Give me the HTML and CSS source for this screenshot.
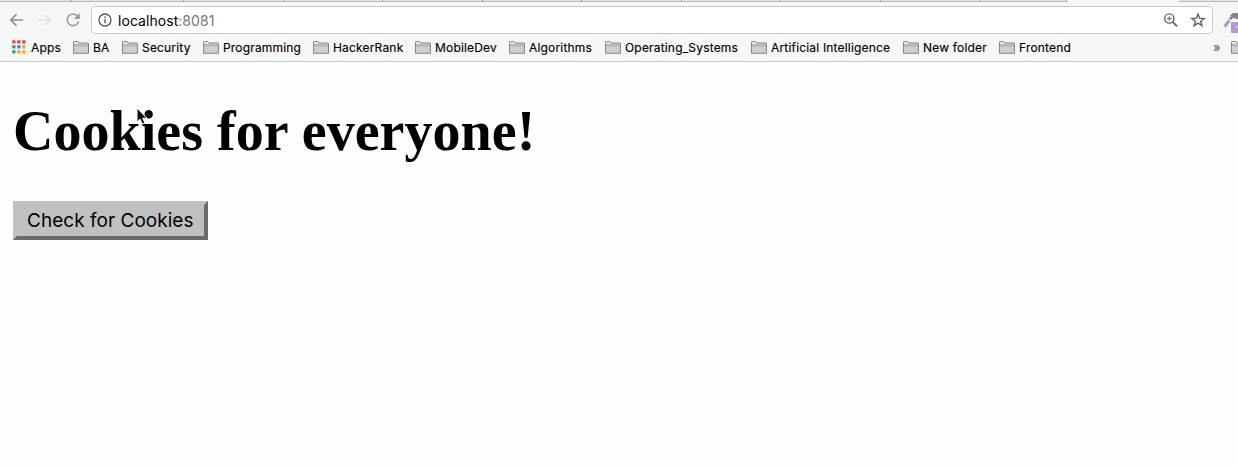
FILE: index.html
```html
<!DOCTYPE html>
<html lang="en">
<head>
<meta charset="utf-8">
<title>Cookies</title>
<link rel="stylesheet" href="styles.css">
</head>
<body>
<svg class="defs" aria-hidden="true">
  <symbol id="folder" viewBox="0 0 16 13">
    <path d="M.5 12.3V1.2Q.5.5 1.2.5H5l1 1.5h8.8q.7 0 .7.7v9.6z" fill="#cecece" stroke="#858585"/>
    <path d="M1.2 1.2h3.6l.8 1.4H1.2z" fill="#fff"/>
    <path d="M1 2.8h14v2H1z" fill="#bcbcbc"/>
    <path d="M1 4.9h14" stroke="#a9a9a9" stroke-width=".7"/>
  </symbol>
</svg>
<header class="browser">
  <div class="tabs"><i class="tab-first"></i><i class="tab-second"></i><i></i><i></i><i></i><i></i><i></i><i></i><i></i><i></i><i class="tab-last"></i><b></b><em></em></div>
  <div class="toolbar">
    <nav class="navigation">
      <svg class="back" width="16" height="14" viewBox="0 0 16 14"><path d="M14 7H2M7.5 1.3 1.8 7l5.7 5.7" fill="none" stroke="#8c8d8e" stroke-width="1.6"/></svg>
      <svg class="forward" width="16" height="14" viewBox="0 0 16 14"><path d="M1 7h12M7.8 1.3 13.5 7l-5.7 5.7" fill="none" stroke="#dfe1e2" stroke-width="1.4"/></svg>
      <svg class="reload" width="16" height="16" viewBox="0 0 16 16"><path d="M13.6 9.4a5.8 5.8 0 1 1-1.3-5.5L14 5.8" fill="none" stroke="#989a9b" stroke-width="1.6"/><path d="M14.8 1v6H8.8z" fill="#989a9b"/></svg>
    </nav>
    <div class="address">
      <svg width="14" height="14" viewBox="0 0 14 14"><circle cx="7" cy="7" r="6" fill="none" stroke="#555" stroke-width="1.3"/><path d="M7 6.2v4M7 3.6v1.4" stroke="#555" stroke-width="1.4"/></svg>
      <span class="url">localhost<span>:8081</span></span>
      <svg class="magnifier" width="16" height="16" viewBox="0 0 16 16"><circle cx="6.3" cy="6.5" r="4.6" fill="none" stroke="#666" stroke-width="1.4"/><path d="m9.8 10 4.3 4.3" stroke="#666" stroke-width="1.8"/><path d="M4 6.5h4.6M6.3 4.2v4.6" stroke="#666" stroke-width="1.1"/></svg>
      <svg class="star" width="16" height="16" viewBox="0 0 16 16"><path d="m8 2 1.6 4.2 4.6.3-3.5 2.8 1.2 4.4L8 11.2l-3.9 2.5 1.2-4.4-3.5-2.8 4.6-.3z" fill="none" stroke="#626262" stroke-width="1.4"/></svg>
    </div>
    <svg class="extension" width="15" height="22" viewBox="0 0 15 22"><path d="m1.5 15.5 5-6" stroke="#b291cf" stroke-width="3"/><path d="M7 4.5 10 2h5v6h-2L10.500 6.500 8 9 5.500 7.500 8 5.500z" fill="#858585"/><path d="M8 11h7v11H8z" fill="#b29bd2"/><path d="M13 16h2" stroke="#fff"/></svg>
  </div>
  <nav class="bookmarks">
    <a class="bookmark apps"><svg width="14" height="14" viewBox="0 0 14 14"><g fill="#ec4141"><path d="M.2.2h3.300v3.300H.2zM5.200.2h3.300v3.300H5.200zM10.200.2h3.300v3.300h-3.300z"/></g><path d="M.2 5.200h3.300v3.300H.2zM.2 10.200h3.300v3.300H.2z" fill="#3d9d59"/><path d="M5.200 5.200h3.300v3.300H5.200z" fill="#3488ed"/><path d="M10.200 5.200h3.300v3.300h-3.300zM5.200 10.200h3.300v3.300H5.200zM10.200 10.200h3.300v3.300h-3.300z" fill="#f2a82c"/></svg><span>Apps</span></a>
    <a class="bookmark"><svg><use href="#folder"/></svg><span>BA</span></a>
    <a class="bookmark"><svg><use href="#folder"/></svg><span>Security</span></a>
    <a class="bookmark"><svg><use href="#folder"/></svg><span>Programming</span></a>
    <a class="bookmark"><svg><use href="#folder"/></svg><span>HackerRank</span></a>
    <a class="bookmark"><svg><use href="#folder"/></svg><span>MobileDev</span></a>
    <a class="bookmark"><svg><use href="#folder"/></svg><span>Algorithms</span></a>
    <a class="bookmark"><svg><use href="#folder"/></svg><span>Operating_Systems</span></a>
    <a class="bookmark"><svg><use href="#folder"/></svg><span>Artificial Intelligence</span></a>
    <a class="bookmark"><svg><use href="#folder"/></svg><span>New folder</span></a>
    <a class="bookmark"><svg><use href="#folder"/></svg><span>Frontend</span></a>
    <span class="more">»</span><svg class="other"><use href="#folder"/></svg>
  </nav>
</header>
<main>
  <h1>Cookies for everyone!</h1>
  <button>Check for Cookies</button>
  <svg class="cursor" width="13" height="20" viewBox="0 0 13 20"><path d="M1 1v14l3-2.800 2.500 5 2.500-1.200-2.300-4.700H11z" fill="#111" stroke="#fff"/></svg>
</main>
</body>
</html>
```
FILE: styles.css
```css
* { box-sizing: border-box; }
body { margin: 0; background: #fefefe; color: #000; height: 466px; overflow: hidden; }
.defs { position: absolute; width: 0; height: 0; }
svg { display: block; flex: none; }
.browser { height: 62px; background: #f5f7f7; border-bottom: 1px solid #c9cbcb; font-family: Inter, sans-serif; }
.tabs { display: flex; height: 2px; }
.tabs i { flex: none; width: 99.5px; border-right: 1px solid #999; border-bottom: 1px solid #b8b8b8; background: #e4e4e4; }
.tabs .tab-first { width: 72px; }
.tabs .tab-second { width: 112px; }
.tabs .tab-last { width: 87px; }
.tabs b { width: 112px; }
.tabs em { flex: 1; background: #e4e4e4; border-bottom: 1px solid #b8b8b8; }
.toolbar { display: flex; height: 35px; padding-top: 4px; }
.navigation { display: flex; width: 91px; height: 28px; align-items: center; padding-left: 9px; gap: 12px; }
.address { display: flex; align-items: center; flex: none; width: 1122px; height: 28px; background: #fff; border: 1px solid #c7c9ca; border-radius: 4px; padding-left: 6px; }
.url { margin-left: 6px; font-size: 14px; width: 98px; letter-spacing: .05px; white-space: nowrap; }
.url span { color: #777; }
.magnifier { margin-left: 947px; }
.star { margin-left: 11px; }
.extension { margin: 5px 0 0 10px; }
.bookmarks { display: grid; grid-template-columns: 61px 49px 81px 110px 102px 94px 96px 146px 152px 96px 214px 18px 16px; padding-left: 12px; height: 20px; align-items: center; }
.bookmark { display: flex; align-items: center; font-size: 12px; font-weight: 400; letter-spacing: .18px; white-space: nowrap; -webkit-text-stroke: .15px #000; }
.bookmark svg, .other { width: 16px; height: 13px; margin-right: 4px; }
.bookmark.apps svg { width: 14px; height: 14px; margin-right: 5px; }
.more { font-size: 13px; line-height: 16px; color: #555; }
main { position: relative; padding: 37px 13px 0; }
h1 { margin: 0; font: bold 56px/64px "Liberation Serif", serif; letter-spacing: .04px; white-space: nowrap; }
button { display: block; margin: 38px 0 0; width: 195px; height: 39px; padding: 0 0 0 10px; background: #c0c0c0; border: 4px solid; border-color: #c0c0c0 #6b6b6b #6b6b6b #c0c0c0; font: 19px Inter, sans-serif; letter-spacing: .03px; text-align: left; color: #000; white-space: nowrap; }
.cursor { position: absolute; left: 136px; top: 45px; }
```
